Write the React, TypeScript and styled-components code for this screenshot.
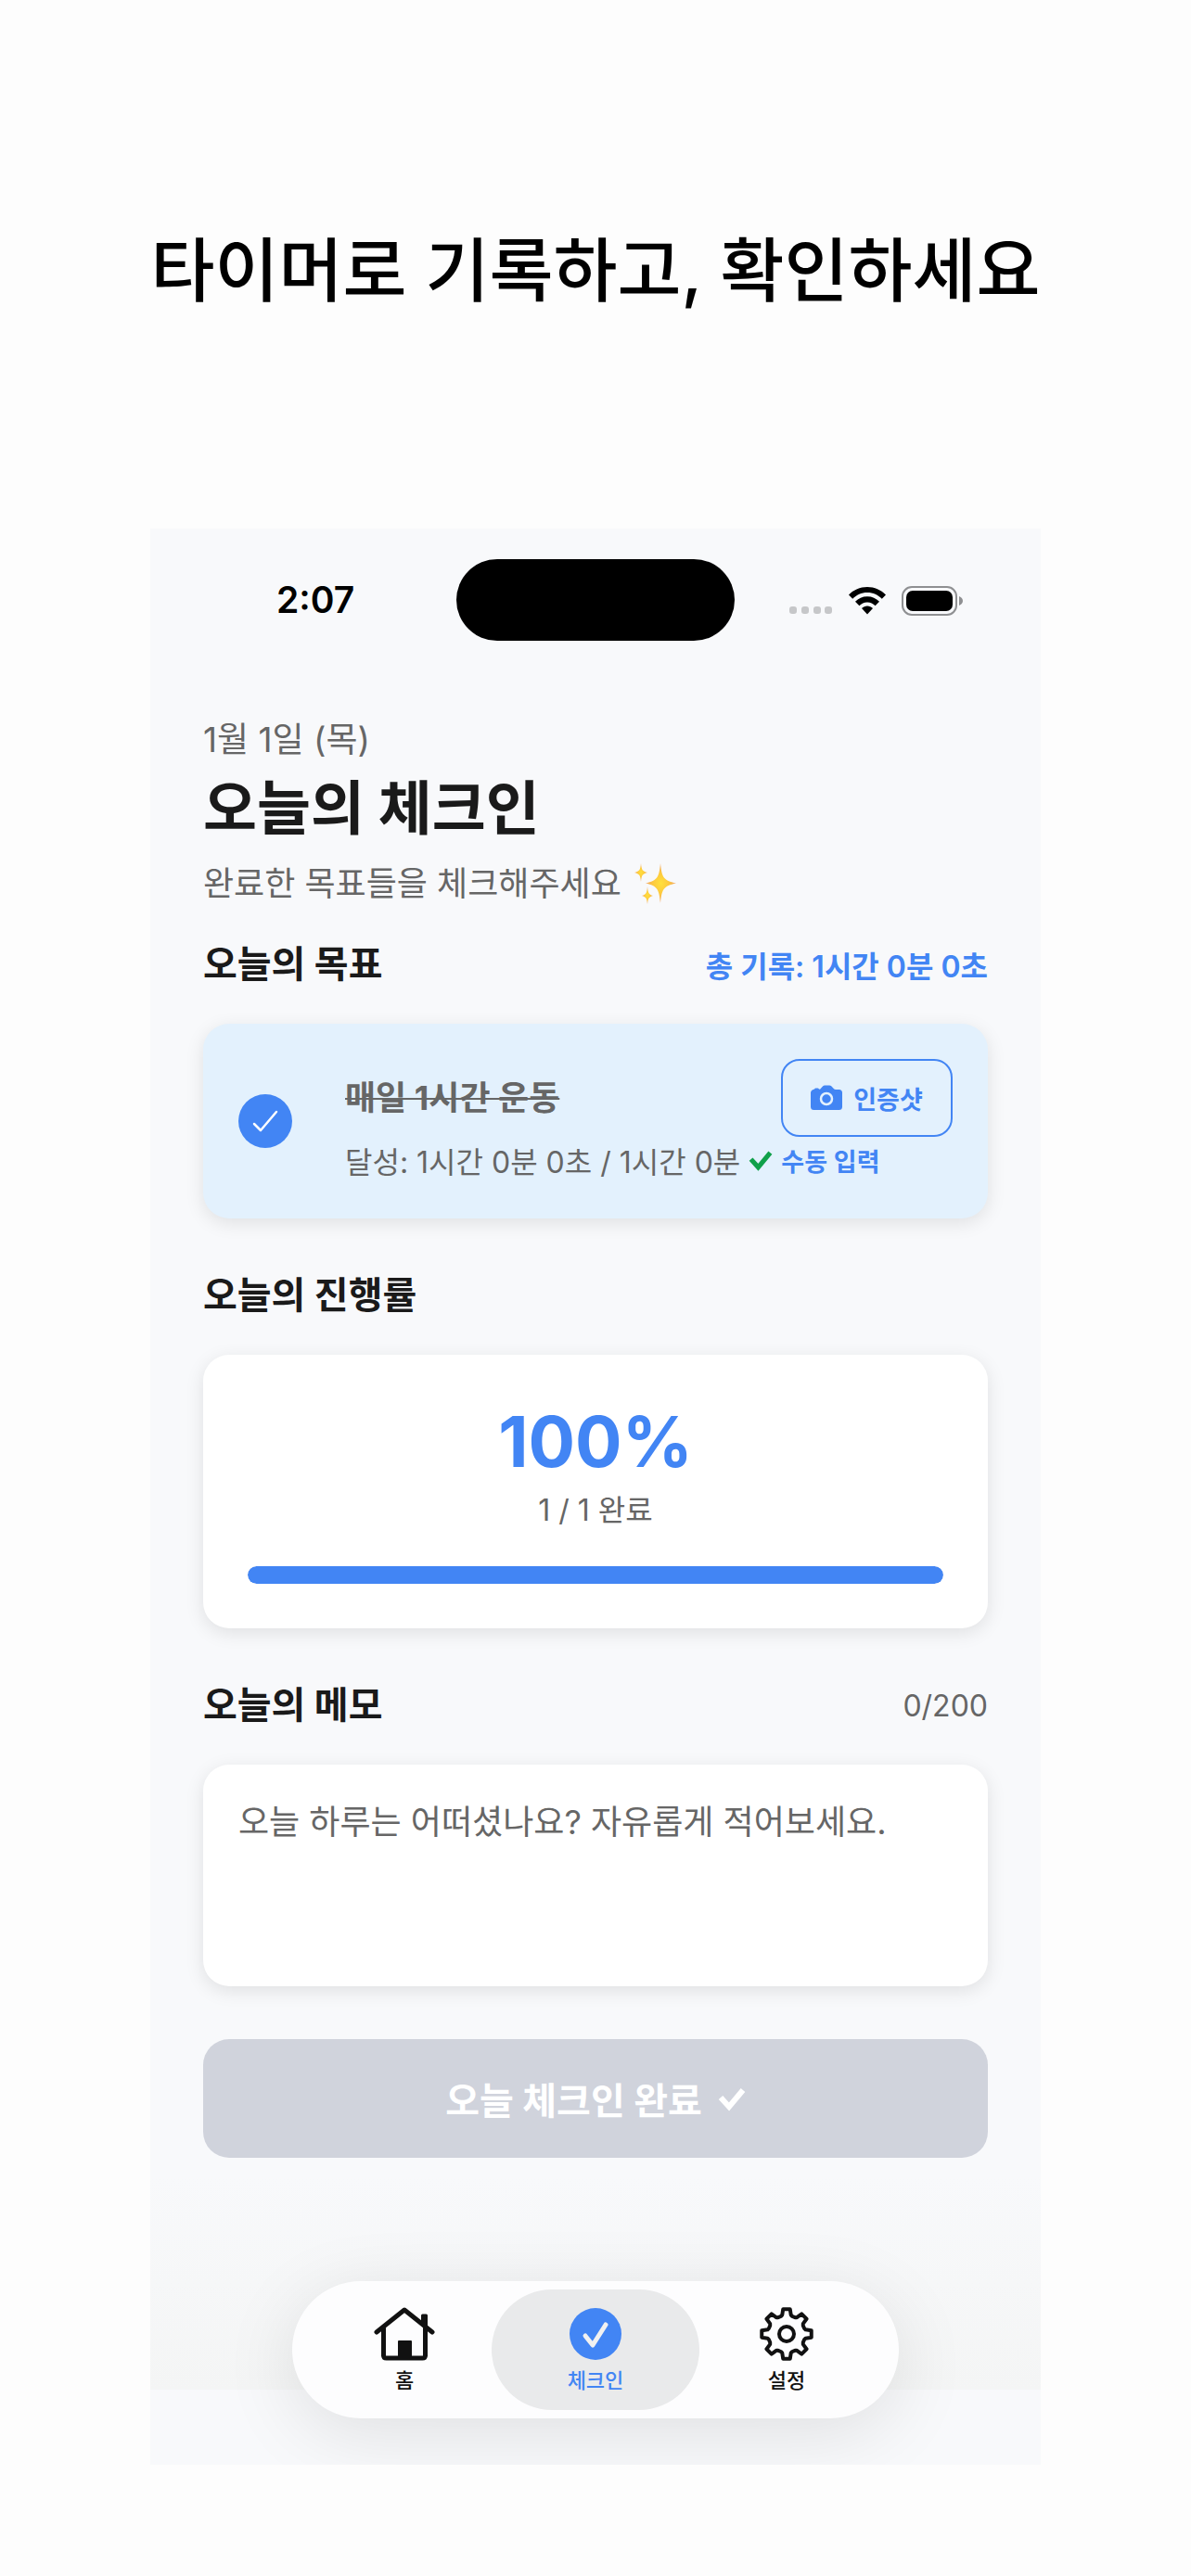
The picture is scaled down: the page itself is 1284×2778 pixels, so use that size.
import React, { useState } from 'react';
import styled, { createGlobalStyle } from 'styled-components';

const blue = '#4285f4';
const ink = '#1a1a1a';
const muted = '#666666';

const GlobalStyle = createGlobalStyle`
  *, *::before, *::after { box-sizing: border-box; }
  body {
    margin: 0;
    background: #fdfdfd;
    color: ${ink};
    font-family: Inter, "Noto Sans CJK KR", sans-serif;
  }
  h1, h2, h3, p { margin: 0; }
  button, textarea { font-family: inherit; }
`;

const Page = styled.div`
  display: flex;
  flex-direction: column;
  align-items: center;
  padding-bottom: 121px;
`;

const Headline = styled.h1`
  padding: 236px 0 222px;
  color: #000;
  font-size: 75px;
  font-weight: 500;
  line-height: 112px;
  text-align: center;
`;

const Phone = styled.main`
  display: flex;
  flex-direction: column;
  width: 100%;
  max-width: 960px;
  background: #f8f9fb;
`;

const StatusBar = styled.header`
  display: grid;
  grid-template-columns: 1fr 300px 1fr;
  align-items: center;
  padding-top: 33px;
  color: #000;
`;

const Clock = styled.time`
  padding-left: 136px;
  font-size: 39px;
  font-weight: 600;
  line-height: 48px;
`;

const Island = styled.div`
  height: 88px;
  border-radius: 44px;
  background: #000;
`;

const StatusIcons = styled.div`
  display: flex;
  align-items: center;
  gap: 17px;
  padding-top: 2px;
  padding-left: 58px;
`;

const Content = styled.div`
  display: flex;
  flex-direction: column;
  padding: 78px 57px 0;
`;

const DateText = styled.p`
  color: ${muted};
  font-size: 37px;
  line-height: 58px;
`;

const Title = styled.h2`
  font-size: 63px;
  font-weight: 700;
  line-height: 88px;
`;

const Subtitle = styled.p`
  display: flex;
  align-items: center;
  gap: 14px;
  margin-top: 10px;
  color: ${muted};
  font-size: 36px;
  line-height: 56px;
`;

const SectionHead = styled.div<{ $top: number }>`
  display: flex;
  align-items: center;
  justify-content: space-between;
  margin-top: ${(p) => p.$top}px;
  margin-bottom: 32px;
`;

const SectionTitle = styled.h3`
  font-size: 40px;
  font-weight: 700;
  line-height: 64px;
`;

const Total = styled.span`
  color: ${blue};
  font-size: 32px;
  font-weight: 600;
`;

const Counter = styled.span`
  color: ${muted};
  font-size: 32px;
`;

const Card = styled.section`
  border-radius: 28px;
  background: #fff;
  box-shadow: 0 5px 20px rgba(0, 0, 0, 0.1);
`;

const GoalCard = styled(Card)`
  display: flex;
  align-items: center;
  gap: 57px;
  padding: 38px;
  background: #e3f1fd;
`;

const CheckLabel = styled.label`
  position: relative;
  display: flex;
  flex: none;
`;

const CheckInput = styled.input`
  width: 58px;
  height: 58px;
  margin: 0;
  border-radius: 50%;
  appearance: none;
  background: #cfd3db;

  &:checked { background: ${blue}; }
`;

const CheckMark = styled.svg`
  position: absolute;
  inset: 0;
  pointer-events: none;
`;

const GoalBody = styled.div`
  display: flex;
  flex: 1;
  flex-direction: column;
`;

const GoalTop = styled.div`
  display: flex;
  align-items: center;
  justify-content: space-between;
`;

const GoalName = styled.h3<{ $done: boolean }>`
  color: ${(p) => (p.$done ? muted : ink)};
  font-size: 36px;
  font-weight: 700;
  line-height: 56px;
  text-decoration: ${(p) => (p.$done ? 'line-through' : 'none')};
  text-decoration-thickness: 2px;
`;

const PhotoButton = styled.button`
  display: flex;
  align-items: center;
  justify-content: center;
  gap: 12px;
  width: 185px;
  height: 84px;
  padding: 0;
  border: 2px solid ${blue};
  border-radius: 20px;
  background: transparent;
  color: ${blue};
  font-size: 27px;
  font-weight: 600;
`;

const GoalBottom = styled.div`
  display: flex;
  align-items: center;
  gap: 9px;
  height: 50px;
  white-space: nowrap;
`;

const GoalDetail = styled.span`
  color: ${muted};
  font-size: 32px;
`;

const TextButton = styled.button`
  padding: 0;
  border: 0;
  background: none;
  color: ${blue};
  font-size: 27px;
  font-weight: 600;
`;

const ProgressCard = styled(Card)`
  display: flex;
  flex-direction: column;
  align-items: center;
  padding: 48px;
`;

const Percent = styled.strong`
  color: ${blue};
  font-size: 75px;
  font-weight: 700;
  line-height: 92px;
`;

const Fraction = styled.span`
  margin: 4px 0 36px;
  color: ${muted};
  font-size: 32px;
  line-height: 48px;
`;

const Track = styled.div`
  width: 100%;
  height: 19px;
  overflow: hidden;
  border-radius: 10px;
  background: #e5e7eb;
`;

const Fill = styled.div`
  height: 100%;
  border-radius: 10px;
  background: ${blue};
`;

const Memo = styled.textarea`
  display: block;
  width: 100%;
  height: 239px;
  padding: 34px 38px;
  border: 0;
  border-radius: 28px;
  outline: 0;
  resize: none;
  background: #fff;
  box-shadow: 0 5px 20px rgba(0, 0, 0, 0.1);
  color: ${ink};
  font-size: 36px;
  line-height: 56px;

  &::placeholder { color: ${muted}; opacity: 1; }
`;

const Submit = styled.button`
  display: flex;
  align-items: center;
  justify-content: center;
  gap: 17px;
  height: 128px;
  margin-top: 57px;
  border: 0;
  border-radius: 28px;
  background: #d0d3dc;
  color: #fff;
  font-size: 40px;
  font-weight: 700;
`;

const Dock = styled.div`
  display: flex;
  justify-content: center;
  margin-top: 20px;
  padding: 113px 0 50px;
  overflow: hidden;
  background: linear-gradient(#f8f9fb, #f4f5f5 230px, #f8f9fb 230px);
`;

const TabBar = styled.nav`
  display: flex;
  padding: 9px;
  border-radius: 74px;
  background: #fdfdfe;
  box-shadow: 0 16px 80px rgba(0, 0, 0, 0.1);
`;

const Tab = styled.button<{ $active: boolean }>`
  display: flex;
  flex-direction: column;
  align-items: center;
  gap: 2px;
  width: 224px;
  height: 130px;
  padding: 18px 0 0;
  border: 0;
  border-radius: 65px;
  background: ${(p) => (p.$active ? '#e9eaeb' : 'transparent')};
  color: ${(p) => (p.$active ? blue : '#111111')};
  font-size: 22px;
  font-weight: 500;
  line-height: 36px;

  & + & { margin-left: -18px; }
`;

const Tick = ({ size, color }: { size: number; color: string }) => (
  <svg width={size} height={size} viewBox="0 0 30 30" aria-hidden="true">
    <path d="M3 14 L12 24 L27 6" fill="none" stroke={color} strokeWidth="6" />
  </svg>
);

const Signal = () => (
  <svg width="48" height="30" viewBox="0 0 48 30" aria-hidden="true">
    {[1, 14, 27, 39].map((x) => (
      <rect key={x} x={x} y="21" width="8" height="8" rx="3" fill="#c6c7c9" />
    ))}
  </svg>
);

const Wifi = () => (
  <svg width="40" height="30" viewBox="0 0 40 30" aria-hidden="true">
    <path d="M20 0C28 0 34.500 3 40 8.500L35.800 12.800C31.500 8.600 26.500 6 20 6S8.500 8.600 4.200 12.800L0 8.500C5.500 3 12 0 20 0Z" />
    <path d="M20 10.300c5.200 0 9.500 2 13 5.500L28.600 20.200C26.200 17.900 23.500 16.400 20 16.400S13.800 17.900 11.400 20.200L7 15.800c3.500-3.500 7.800-5.500 13-5.500Z" />
    <path d="M20 20.500c2.300 0 4.300.9 6 2.600L20 29.500l-6-6.400c1.700-1.700 3.700-2.600 6-2.600Z" />
  </svg>
);

const Battery = () => (
  <svg width="67" height="32" viewBox="0 0 67 32" aria-hidden="true">
    <rect x="1" y="1" width="58" height="30" rx="10" fill="none" stroke="#8f9092" strokeWidth="2" />
    <rect x="5" y="5" width="50" height="22" rx="7" />
    <path d="M62 11c2.500 1 4 2.800 4 5s-1.500 4-4 5Z" fill="#8f9092" />
  </svg>
);

const Sparkles = () => (
  <svg width="46" height="44" viewBox="0 0 46 44" aria-hidden="true">
    <defs>
      <radialGradient id="spark">
        <stop offset="0" stopColor="#ffe03c" />
        <stop offset="0.5" stopColor="#fdca3e" />
        <stop offset="1" stopColor="#f0a368" />
      </radialGradient>
    </defs>
    <g fill="url(#spark)">
      <path d="M28 0C29.500 15 31 18.500 45 21.500C31 24.500 29.500 28 28 43C26.500 28 25 24.500 12 21.500C25 18.500 26.500 15 28 0Z" />
      <path d="M7 0C7.700 7 8.500 8.700 14 10C8.500 11.300 7.700 13 7 20C6.300 13 5.500 11.300 0 10C5.500 8.700 6.300 7 7 0Z" />
      <path d="M14 25C14.700 32 15.200 33.500 20 35C15.200 36.500 14.700 38 14 44C13.300 38 12.800 36.500 8 35C12.800 33.500 13.300 32 14 25Z" />
    </g>
  </svg>
);

const Camera = () => (
  <svg width="34" height="28" viewBox="0 0 34 28" aria-hidden="true">
    <path
      fill="currentColor"
      d="M4 4.500 5 3.400h3L9 4.500l1 .2L13 1.400Q14 .5 15 .5h5Q21.500.5 22.500 1.400L25 4.200Q25.800 5 27 5h3.500Q34 5 34 8.500v15q0 3.500-3.500 3.500h-27Q0 27 0 23.500V8.500Q0 5.500 4 4.500Z"
    />
    <circle cx="17" cy="15" r="6" fill="currentColor" stroke="#e3f1fd" strokeWidth="2.500" />
  </svg>
);

const HomeIcon = () => (
  <svg width="66" height="60" viewBox="0 0 66 60" fill="none" stroke="currentColor" strokeWidth="5" strokeLinecap="round" strokeLinejoin="round" aria-hidden="true">
    <path d="M3 28 33 4l30 24" />
    <path d="M10.500 24v29q0 3 3 3h39q3 0 3-3V24" />
    <path strokeWidth="3" d="M52.500 10h4v13l-4-3Z" fill="currentColor" />
    <path strokeWidth="2" d="M27 38h13v18H27Z" fill="currentColor" />
  </svg>
);

const CheckIcon = () => (
  <svg width="60" height="60" viewBox="0 0 60 60" aria-hidden="true">
    <circle cx="30" cy="30" r="28" fill={blue} />
    <path d="M19 32l8 10L41 20" fill="none" stroke="#f1f1f1" strokeWidth="5" strokeLinecap="round" strokeLinejoin="round" />
  </svg>
);

const gearPath = (() => {
  const points: string[] = [];
  const shape: [number, number][] = [
    [-18, 20], [-13, 21], [-8, 27], [8, 27], [13, 21], [18, 20],
  ];
  for (let i = 0; i < 8; i += 1) {
    shape.forEach(([offset, r]) => {
      const a = ((i * 45 + offset - 90) * Math.PI) / 180;
      points.push(`${(30 + r * Math.cos(a)).toFixed(2)} ${(30 + r * Math.sin(a)).toFixed(2)}`);
    });
  }
  return `M${points.join('L')}Z`;
})();

const GearIcon = () => (
  <svg width="60" height="60" viewBox="0 0 60 60" fill="none" stroke="currentColor" strokeWidth="4" strokeLinejoin="round" aria-hidden="true">
    <path d={gearPath} />
    <circle cx="30" cy="30" r="8" />
  </svg>
);

const tabs = [
  { name: '홈', Icon: HomeIcon },
  { name: '체크인', Icon: CheckIcon },
  { name: '설정', Icon: GearIcon },
];

export default function App() {
  const [done, setDone] = useState(true);
  const [memo, setMemo] = useState('');
  const [active, setActive] = useState('체크인');
  const count = done ? 1 : 0;

  return (
    <>
      <GlobalStyle />
      <Page>
        <Headline>타이머로 기록하고, 확인하세요</Headline>
        <Phone>
          <StatusBar>
            <Clock>2:07</Clock>
            <Island />
            <StatusIcons>
              <Signal />
              <Wifi />
              <Battery />
            </StatusIcons>
          </StatusBar>
          <Content>
            <DateText>1월 1일 (목)</DateText>
            <Title>오늘의 체크인</Title>
            <Subtitle>
              완료한 목표들을 체크해주세요
              <Sparkles />
            </Subtitle>

            <SectionHead $top={27}>
              <SectionTitle>오늘의 목표</SectionTitle>
              <Total>총 기록: 1시간 0분 0초</Total>
            </SectionHead>
            <GoalCard>
              <CheckLabel>
                <CheckInput
                  type="checkbox"
                  aria-label="매일 1시간 운동"
                  checked={done}
                  onChange={(e) => setDone(e.target.checked)}
                />
                <CheckMark width="58" height="58" viewBox="0 0 58 58" aria-hidden="true">
                  <path d="M17 32l7 7L41 19" fill="none" stroke="#fff" strokeWidth="2.500" strokeLinecap="round" strokeLinejoin="round" />
                </CheckMark>
              </CheckLabel>
              <GoalBody>
                <GoalTop>
                  <GoalName $done={done}>매일 1시간 운동</GoalName>
                  <PhotoButton type="button">
                    <Camera />
                    인증샷
                  </PhotoButton>
                </GoalTop>
                <GoalBottom>
                  <GoalDetail>달성: 1시간 0분 0초 / 1시간 0분</GoalDetail>
                  <Tick size={26} color="#10a04a" />
                  <TextButton type="button">수동 입력</TextButton>
                </GoalBottom>
              </GoalBody>
            </GoalCard>

            <SectionHead $top={51}>
              <SectionTitle>오늘의 진행률</SectionTitle>
            </SectionHead>
            <ProgressCard>
              <Percent>{count * 100}%</Percent>
              <Fraction>{count} / 1 완료</Fraction>
              <Track>
                <Fill style={{ width: `${count * 100}%` }} />
              </Track>
            </ProgressCard>

            <SectionHead $top={51}>
              <SectionTitle as="label" htmlFor="memo">오늘의 메모</SectionTitle>
              <Counter>{memo.length}/200</Counter>
            </SectionHead>
            <Memo
              id="memo"
              maxLength={200}
              placeholder="오늘 하루는 어떠셨나요? 자유롭게 적어보세요."
              value={memo}
              onChange={(e) => setMemo(e.target.value)}
            />
            <Submit type="button">
              오늘 체크인 완료
              <Tick size={30} color="#ffffff" />
            </Submit>
          </Content>
          <Dock>
            <TabBar>
              {tabs.map(({ name, Icon }) => (
                <Tab key={name} type="button" $active={name === active} onClick={() => setActive(name)}>
                  <Icon />
                  {name}
                </Tab>
              ))}
            </TabBar>
          </Dock>
        </Phone>
      </Page>
    </>
  );
}
